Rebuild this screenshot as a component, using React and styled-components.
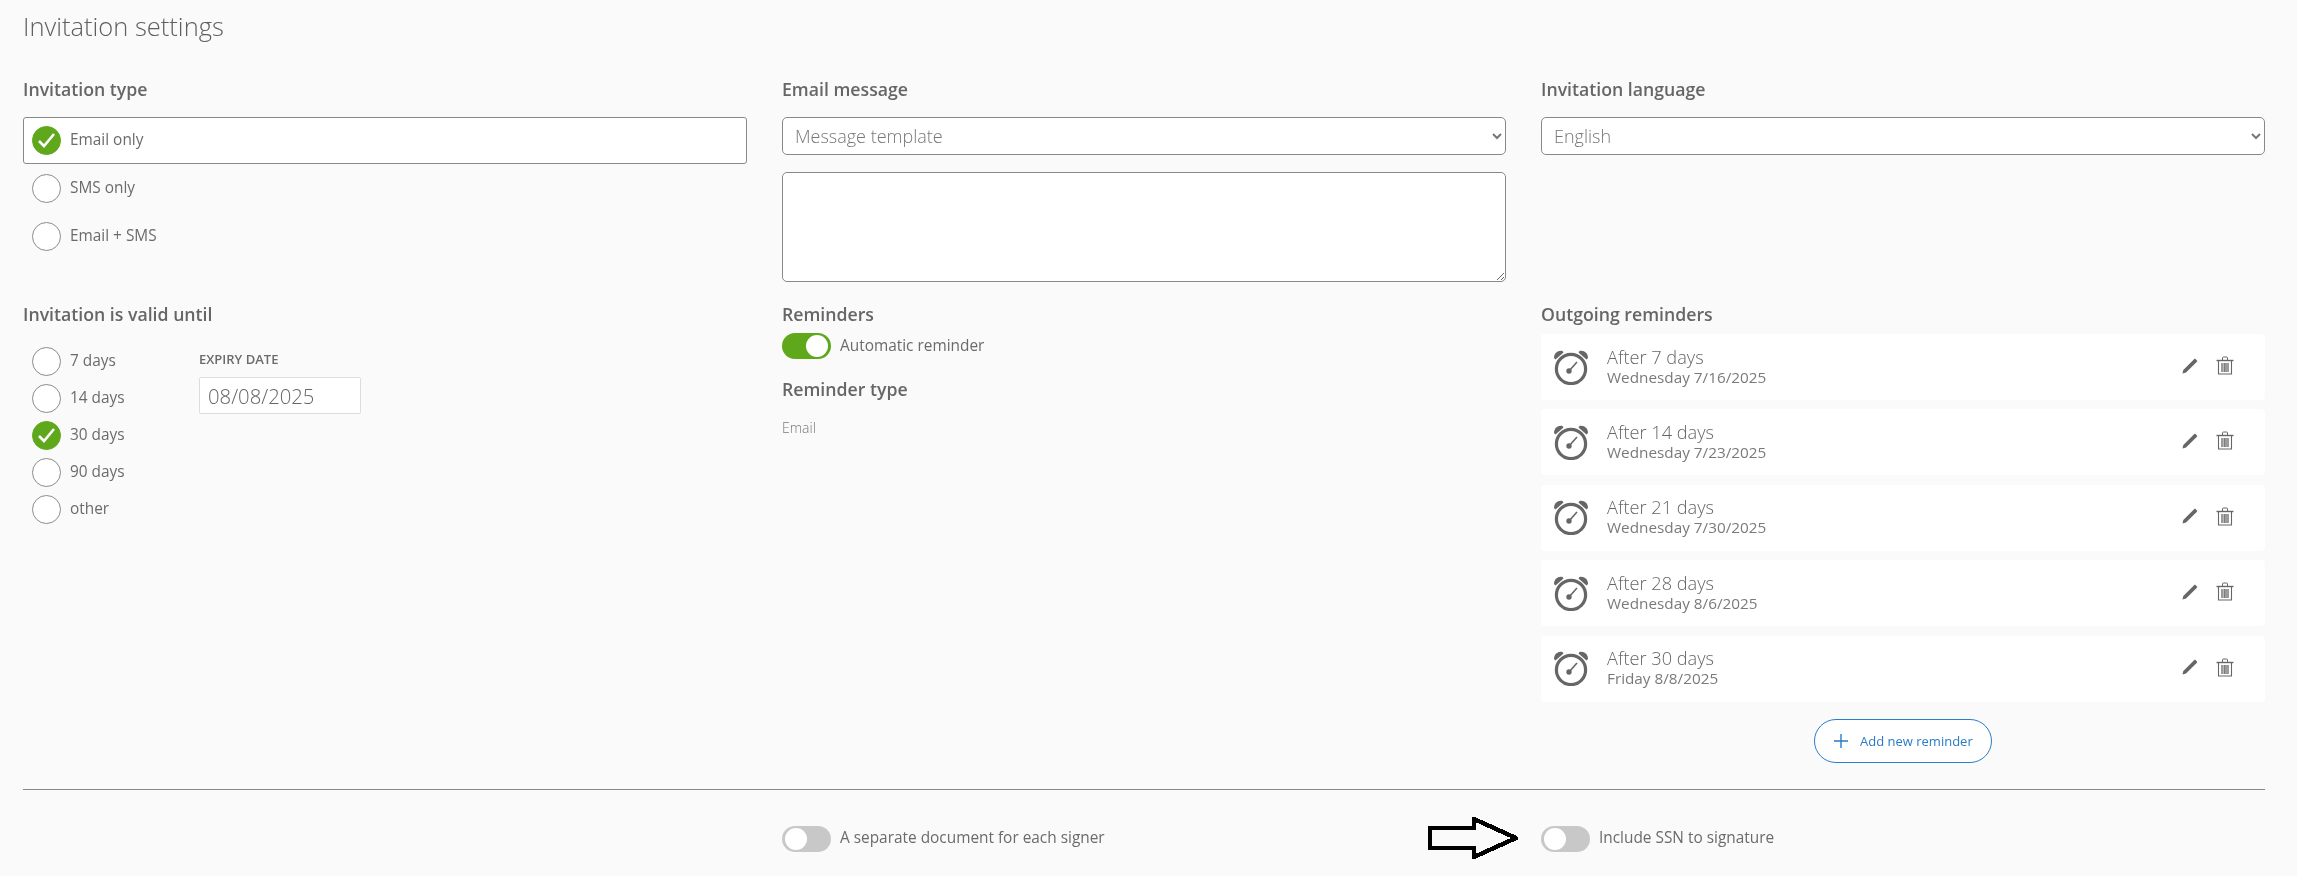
import React from "react";
import styled, { createGlobalStyle } from "styled-components";

const Global = createGlobalStyle`
  html, body { margin: 0; padding: 0; background: #fafafa; }
  body { font-family: "Open Sans", "Liberation Sans", sans-serif; color: #666; }
  * { box-sizing: border-box; }
`;

const Page = styled.div`
  width: 2297px;
  height: 876px;
  padding: 0 32px 0 23px;
  overflow: hidden;
  will-change: transform;
`;
const Title = styled.h1`
  margin: 0;
  height: 77px;
  padding-top: 9px;
  font-size: 25.5px;
  line-height: 34px;
  font-weight: 300;
  color: #5f5f5f;
`;
const Grid = styled.div`
  display: grid;
  grid-template-columns: repeat(3, 724px);
  column-gap: 35px;
`;
const TopRow = styled(Grid)`
  height: 225px;
`;
const Heading = styled.h2`
  margin: 0;
  height: 24px;
  font-size: 17.7px;
  line-height: 24px;
  font-weight: 600;
  color: #666;
`;
const Label = styled.span`
  font-size: 15.4px;
  line-height: 20px;
  font-weight: 400;
  color: #6b6b6b;
  padding-bottom: 1px;
`;
const OptionList = styled.div`
  display: flex;
  flex-direction: column;
  gap: 1px;
  margin-top: 16px;
`;
const OptionRow = styled.div`
  display: flex;
  align-items: center;
  gap: 9px;
  height: 47px;
  padding: 0 8px;
  border-radius: 3px;
  border: 1px solid ${(p) => (p.$selected ? "#888" : "transparent")};
  background: ${(p) => (p.$selected ? "#fff" : "transparent")};
`;
const RadioCircle = styled.span`
  flex: none;
  width: 29px;
  height: 29px;
  border-radius: 50%;
  display: flex;
  align-items: center;
  justify-content: center;
  border: 1.5px solid ${(p) => (p.$on ? "#5fa81c" : "#8a8a8a")};
  background: ${(p) => (p.$on ? "#5fa81c" : "#fff")};
`;
const Select = styled.select`
  display: block;
  width: 100%;
  height: 38px;
  margin-top: 16px;
  padding: 0 8px;
  border: 1px solid #888;
  border-radius: 5px;
  background: #fff;
  font-family: inherit;
  font-size: 18px;
  font-weight: 300;
  color: #777;
`;
const TextArea = styled.textarea`
  display: block;
  width: 100%;
  height: 110px;
  margin-top: 17px;
  border: 1px solid #888;
  border-radius: 5px;
  background: #fff;
`;
const ValidBody = styled.div`
  display: flex;
  margin-top: 21px;
  padding-left: 9px;
`;
const DayList = styled.div`
  display: flex;
  flex-direction: column;
  gap: 8px;
  width: 167px;
`;
const DayRow = styled.div`
  display: flex;
  align-items: center;
  gap: 9px;
  height: 29px;
`;
const ExpiryBlock = styled.div`
  display: flex;
  flex-direction: column;
  padding-top: 3px;
`;
const SmallCaps = styled.div`
  font-size: 13px;
  line-height: 18px;
  font-weight: 600;
  color: #6b6b6b;
  text-transform: uppercase;
`;
const DateInput = styled.input`
  width: 162px;
  height: 37px;
  margin-top: 9px;
  padding: 0 8px;
  border: 1px solid #ddd;
  border-radius: 2px;
  background: #fff;
  font-family: inherit;
  font-size: 20.3px;
  font-weight: 300;
  color: #666;
`;
const ToggleRow = styled.div`
  display: flex;
  align-items: center;
  gap: 9px;
  height: 26px;
  margin-top: ${(p) => p.$mt || 0}px;
`;
const Track = styled.span`
  flex: none;
  display: flex;
  align-items: center;
  justify-content: ${(p) => (p.$on ? "flex-end" : "flex-start")};
  width: 49px;
  height: 26px;
  padding: 0 3px;
  border-radius: 13px;
  background: ${(p) => (p.$on ? "#5fa81c" : "#c8c8c8")};
`;
const Knob = styled.span`
  width: 22px;
  height: 22px;
  border-radius: 50%;
  background: #fff;
`;
const SubHeading = styled(Heading)`
  margin-top: 18px;
`;
const Plain = styled.div`
  margin-top: 17px;
  font-size: 14px;
  line-height: 20px;
  font-weight: 300;
  color: #777;
`;
const ReminderList = styled.div`
  display: flex;
  flex-direction: column;
  gap: 9.4px;
  margin-top: 8px;
`;
const Card = styled.div`
  display: flex;
  align-items: center;
  height: 66px;
  padding: 0 31px 0 12px;
  background: #fff;
  border-radius: 4px;
`;
const CardText = styled.div`
  flex: 1;
  margin-left: 18px;
  padding-bottom: 3px;
`;
const CardTitle = styled.div`
  font-size: 18.2px;
  line-height: 22px;
  font-weight: 300;
  color: #666;
`;
const CardDate = styled.div`
  font-size: 15.3px;
  line-height: 18px;
  font-weight: 400;
  color: #7a7a7a;
`;
const CardActions = styled.div`
  display: flex;
  align-items: center;
  gap: 18px;
  padding-bottom: 3px;
`;
const AddWrap = styled.div`
  display: flex;
  justify-content: center;
  margin-top: 17px;
`;
const AddButton = styled.button`
  display: flex;
  align-items: center;
  gap: 12px;
  width: 178px;
  height: 44px;
  padding: 0 0 0 19px;
  border: 1px solid #2a7bc8;
  border-radius: 22px;
  background: #fff;
  font-family: inherit;
  font-size: 13px;
  font-weight: 400;
  color: #2a7bc8;
`;
const Divider = styled.hr`
  margin: 26px 0 0;
  height: 0;
  border: 0;
  border-top: 1px solid #888;
`;
const FooterRow = styled(Grid)`
  margin-top: 36px;
`;
const ArrowCell = styled.div`
  display: flex;
  align-items: center;
  position: relative;
`;
const ArrowMark = styled.svg`
  position: absolute;
  left: -113px;
  top: -10px;
`;

const Check = () => (
  <svg width="19" height="17" viewBox="0 0 19 17" fill="none">
    <path d="M2 9 L7 14 L17 2" stroke="#fff" strokeWidth="2.6" />
  </svg>
);
const Radio = ({ on }) => <RadioCircle $on={on}>{on && <Check />}</RadioCircle>;
const Toggle = ({ on, children, mt }) => (
  <ToggleRow $mt={mt}>
    <Track $on={on}><Knob /></Track>
    <Label>{children}</Label>
  </ToggleRow>
);
const Alarm = () => (
  <svg width="36" height="35" viewBox="0 0 36 35" fill="none">
    <circle cx="18" cy="19" r="14.6" stroke="#666" strokeWidth="3.2" />
    <path d="M1 8 C1 3 5 0 9.5 1 L10.5 2.5 L2.5 9.5 Z" fill="#666" />
    <path d="M35 8 C35 3 31 0 26.5 1 L25.5 2.5 L33.5 9.5 Z" fill="#666" />
    <circle cx="16" cy="21" r="2.7" fill="#666" />
    <path d="M16 21 L24 12" stroke="#666" strokeWidth="1.6" />
  </svg>
);
const Pencil = () => (
  <svg width="16" height="16" viewBox="0 0 16 16">
    <path d="M0.5 15.5 L1.3 12 L11.8 1.6 L13 0.6 L15.4 2.9 L14.4 4.2 L4 14.6 Z" fill="#666" />
  </svg>
);
const Trash = () => (
  <svg width="18" height="19" viewBox="0 0 18 19" fill="none" stroke="#666">
    <path d="M0.5 4.5 H17.5" strokeWidth="1.4" />
    <path d="M6.5 4 V2 Q6.5 1 7.5 1 H10.5 Q11.5 1 11.5 2 V4" strokeWidth="1" />
    <path d="M2.5 5 V18 H15.5 V5" strokeWidth="1.1" />
    <path d="M6 7 V16 M8.2 7 V16 M10 7 V16 M12 7 V16" strokeWidth="1.3" />
  </svg>
);

const reminders = [
  ["After 7 days", "Wednesday 7/16/2025"],
  ["After 14 days", "Wednesday 7/23/2025"],
  ["After 21 days", "Wednesday 7/30/2025"],
  ["After 28 days", "Wednesday 8/6/2025"],
  ["After 30 days", "Friday 8/8/2025"],
];
const days = [["7 days"], ["14 days"], ["30 days", true], ["90 days"], ["other"]];

export default function App() {
  return (
    <Page>
      <Global />
      <Title>Invitation settings</Title>
      <TopRow>
        <div>
          <Heading>Invitation type</Heading>
          <OptionList>
            <OptionRow $selected><Radio on /><Label>Email only</Label></OptionRow>
            <OptionRow><Radio /><Label>SMS only</Label></OptionRow>
            <OptionRow><Radio /><Label>Email + SMS</Label></OptionRow>
          </OptionList>
        </div>
        <div>
          <Heading>Email message</Heading>
          <Select defaultValue="t"><option value="t">Message template</option></Select>
          <TextArea />
        </div>
        <div>
          <Heading>Invitation language</Heading>
          <Select defaultValue="en"><option value="en">English</option></Select>
        </div>
      </TopRow>
      <Grid>
        <div>
          <Heading>Invitation is valid until</Heading>
          <ValidBody>
            <DayList>
              {days.map(([d, on]) => (
                <DayRow key={d}><Radio on={on} /><Label>{d}</Label></DayRow>
              ))}
            </DayList>
            <ExpiryBlock>
              <SmallCaps>Expiry date</SmallCaps>
              <DateInput defaultValue="08/08/2025" />
            </ExpiryBlock>
          </ValidBody>
        </div>
        <div>
          <Heading>Reminders</Heading>
          <Toggle on mt={7}>Automatic reminder</Toggle>
          <SubHeading>Reminder type</SubHeading>
          <Plain>Email</Plain>
        </div>
        <div>
          <Heading>Outgoing reminders</Heading>
          <ReminderList>
            {reminders.map(([t, d]) => (
              <Card key={t}>
                <Alarm />
                <CardText>
                  <CardTitle>{t}</CardTitle>
                  <CardDate>{d}</CardDate>
                </CardText>
                <CardActions><Pencil /><Trash /></CardActions>
              </Card>
            ))}
          </ReminderList>
          <AddWrap>
            <AddButton>
              <svg width="14" height="14" viewBox="0 0 14 14"><path d="M7 0 V14 M0 7 H14" stroke="#2a7bc8" strokeWidth="1.4" /></svg>
              Add new reminder
            </AddButton>
          </AddWrap>
        </div>
      </Grid>
      <Divider />
      <FooterRow>
        <div />
        <Toggle>A separate document for each signer</Toggle>
        <ArrowCell>
          <ArrowMark width="92" height="44" viewBox="0 0 92 44" shapeRendering="crispEdges" fill="none">
            <path d="M2 12 H46 V3 L88 22 L46 41 V32 H2 Z" stroke="#000" strokeWidth="4.4" strokeLinejoin="round" />
          </ArrowMark>
          <Toggle>Include SSN to signature</Toggle>
        </ArrowCell>
      </FooterRow>
    </Page>
  );
}
